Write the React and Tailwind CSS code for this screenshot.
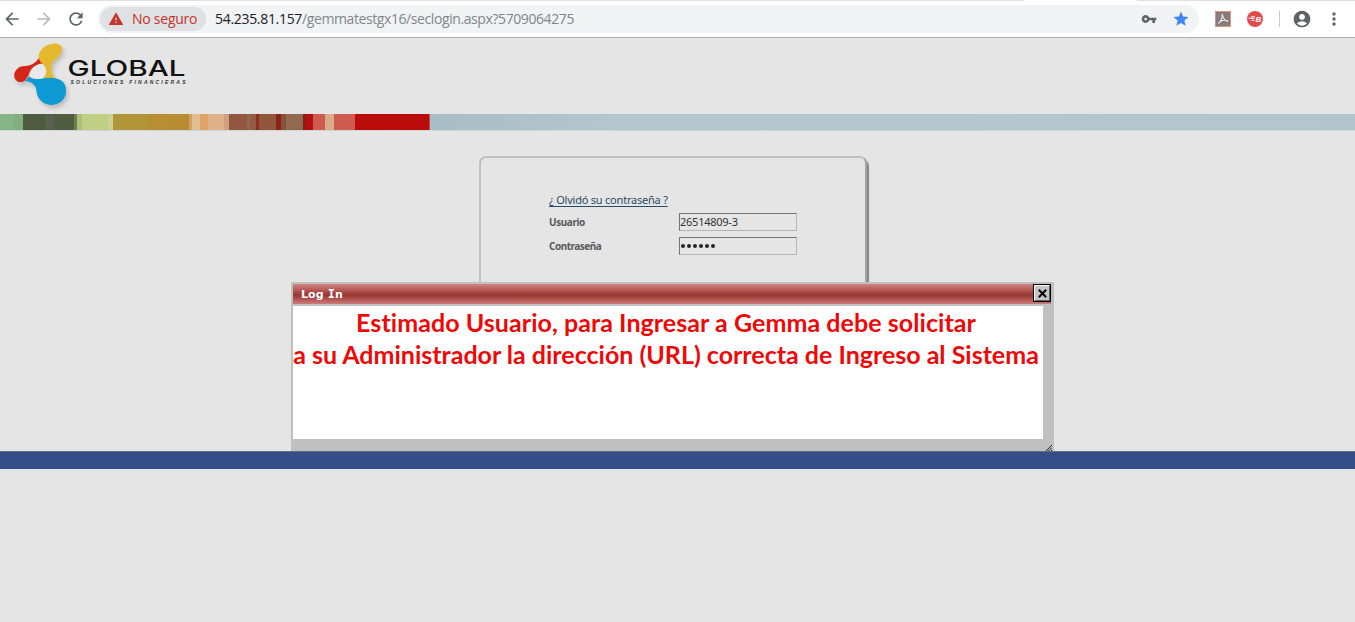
import React from "react";
import { MdArrowBack, MdArrowForward, MdRefresh, MdWarning, MdVpnKey, MdStar, MdAccountCircle, MdMoreVert } from "react-icons/md";

const stripes = [
  [0, 14, "#86b585"], [14, 9, "#80ae7e"], [23, 22, "#4e5b3e"], [45, 9, "#5b5f4d"], [54, 20, "#4f5c3f"], [74, 3, "#6f7d52"],
  [77, 5, "#abc078"], [82, 26, "#bfcf84"], [108, 5, "#ccd194"], [113, 35, "#b09638"], [148, 24, "#b68f34"], [172, 17, "#ba8c32"],
  [189, 3, "#cda466"], [192, 8, "#dfbe92"], [200, 8, "#e0a266"], [208, 16, "#dfb28c"], [224, 5, "#cba17e"],
  [229, 18, "#935741"], [247, 3, "#8e6b51"], [250, 6, "#965a43"], [256, 3, "#8d2d1c"], [259, 17, "#93543e"],
  [276, 5, "#8b2418"], [281, 5, "#87523d"], [286, 17, "#906a50"], [303, 2, "#7b2116"], [305, 8, "#b5110f"],
  [313, 12, "#cf5b50"], [325, 9, "#d9aa8b"], [334, 21, "#cf5b50"], [355, 74, "#bb0c0c"], [429, 1, "#c94a4a"],
];

function Toolbar() {
  return (
    <header className="flex h-[38px] flex-col border-b border-[#aeaeae] bg-white">
      <div className="flex h-px justify-between">
        <span className="w-[1024px] bg-[#dee1e6]" />
        <span className="w-[218px] bg-[#dee1e6]" />
      </div>
      <div className="flex h-9 items-center text-[#5f6368]">
        <MdArrowBack className="ml-[2px] size-5 shrink-0" />
        <MdArrowForward className="ml-3 size-5 shrink-0 text-[#babcbe]" />
        <MdRefresh className="ml-3 size-5 shrink-0" />
        <div className="ml-3 flex h-7 w-[1101px] shrink-0 items-center rounded-full bg-[#f1f3f4] pl-[2px]">
          <div className="flex h-6 w-[106px] shrink-0 items-center rounded-full bg-[#dfe1e4] pl-2 text-[#c5352b]">
            <MdWarning className="size-4 shrink-0" />
            <span className="ml-2 whitespace-nowrap font-['Open_Sans',sans-serif] text-[14px] leading-5 tracking-[-0.25px]">No seguro</span>
          </div>
          <p className="ml-[9px] whitespace-nowrap font-['Open_Sans',sans-serif] text-[14px] leading-5 tracking-[-0.41px] text-[#80868b]">
            <span className="tracking-[-0.31px] text-[#202124]">54.235.81.157</span>/gemmatestgx16/seclogin.aspx?5709064275
          </p>
          <MdVpnKey className="ml-auto size-4 shrink-0" />
          <MdStar className="ml-[15px] mr-[9px] size-[18px] shrink-0 text-[#4285f4]" />
        </div>
        <svg className="ml-4 size-4 shrink-0" viewBox="0 0 16 16" fill="none">
          <rect x=".5" y=".5" width="15" height="15" fill="#857c7c" stroke="#dd8f80" />
          <path d="M7.300 3C7.500 7 6 10 3.500 12.500M7.300 3C7.800 7 9.500 9.500 13 10.500M5 10.500C7.500 9 9.500 8.800 13 9.500" stroke="#f3eeee" strokeWidth="1.1" />
        </svg>
        <svg className="ml-4 size-4 shrink-0" viewBox="0 0 16 16">
          <circle cx="8" cy="8" r="8" fill="#e24a4e" />
          <path d="M1.500 7.300h6M4 5.800h4M4.500 9.300h3" stroke="white" strokeWidth="1.100" fill="none" />
          <text x="8.500" y="10.800" fill="white" fontFamily="Liberation Sans, sans-serif" fontWeight="700" fontStyle="italic" fontSize="8">B</text>
        </svg>
        <span className="ml-4 h-4 w-px bg-[#c8cacd]" />
        <MdAccountCircle className="ml-3 size-5 shrink-0" />
        <MdMoreVert className="ml-3 size-5 shrink-0" />
      </div>
    </header>
  );
}

function Logo() {
  return (
    <svg className="block h-[76px] w-[200px]" viewBox="0 38 200 76">
      <defs>
        <filter id="soft" x="-20%" y="-20%" width="150%" height="150%">
          <feDropShadow dx="2" dy="3" stdDeviation="2" floodColor="#777" floodOpacity=".4" />
        </filter>
      </defs>
      <g filter="url(#soft)">
        <path d="M40 56C36.500 62 33 65.500 25 66C18 66 14 71 14.200 76C14.500 82 22 84 25.500 80C30 76 28 69 36 65.500C39 64 41 64 43 64Z" fill="#d42617" />
        <path d="M39 54C42 47 48 43.500 55 43.500C62 44 63.500 48 61 53C58 59 51.500 60 51.300 67C51.500 73 52 76 57 79.500L43 79.500C48 74 47 67 42 63C39 61 38 57 39 54Z" fill="#e5b92d" />
        <path d="M24.500 81C26 80.500 27.500 79 28.800 76.500C33 79.500 37 79.500 43 78.500C50 77 57 78 62 81C66 84 66.500 90 65.800 94C64 101 58 105 51 105C43 104.500 37 99 36.500 91C36 85 32 81.500 24.500 81Z" fill="#0799d3" />
        <path d="M29.500 76C30.500 69 36 64 41.500 63.500C44.500 65.500 46.500 69 46 72.500C45.500 75 44 77.500 42 78.500C37 79.500 33 79 29.500 76Z" fill="#e9e9e9" />
      </g>
      <text x="67.500" y="75.500" fill="#111" fontFamily="Inter, sans-serif" fontWeight="500" fontSize="21.500" textLength="118" lengthAdjust="spacingAndGlyphs">GLOBAL</text>
      <text x="70.500" y="83.500" fill="#333" fontFamily="Liberation Sans, sans-serif" fontWeight="700" fontStyle="italic" fontSize="5" textLength="115">SOLUCIONES FINANCIERAS</text>
    </svg>
  );
}

function ColorBand() {
  return (
    <div className="flex h-[17px] border-b border-[#d0d4d4] bg-[#b2c4cc]">
      {stripes.map(([x, w, color]) => (
        <span key={x} className="h-full shrink-0" style={{ width: w, backgroundColor: color }} />
      ))}
      <span className="h-full flex-1 bg-linear-to-r from-[#a9bdc8] via-[#b3c6ce] via-20% to-[#b3c5cc]" />
    </div>
  );
}

function LoginCard() {
  return (
    <section className="ml-[479px] mt-[25px] h-[289px] w-[388px] rounded-[7px] border-2 border-[#c0c0c0] border-r-[#a5a5a5] pl-[68px] pt-[33px] font-['Noto_Sans',sans-serif] text-[#5a5a5a] shadow-[2px_3px_1px_#858585]">
      <a className="block h-[19px] whitespace-nowrap text-[11px] leading-[18px] tracking-[-0.22px] text-[#294b65] underline underline-offset-2">¿ Olvidó su contraseña ?</a>
      <div className="flex h-6 items-center">
        <label className="w-[130px] text-[10px] font-bold tracking-[-0.42px]">Usuario</label>
        <div className="h-[18px] w-[118px] border border-[#b5b5b5] border-l-[#747474] border-t-[#747474] text-[11px] leading-4 tracking-[-0.25px] text-[#333]">26514809-3</div>
      </div>
      <div className="flex h-6 items-center">
        <label className="w-[130px] text-[10px] font-bold tracking-[-0.5px]">Contraseña</label>
        <div className="flex h-[18px] w-[118px] items-center gap-[2px] border border-[#b5b5b5] border-l-[#747474] border-t-[#747474] pl-px">
          {[0, 1, 2, 3, 4, 5].map((i) => <span key={i} className="size-1 rounded-full bg-[#202820]" />)}
        </div>
      </div>
    </section>
  );
}

function Dialog() {
  return (
    <div className="absolute left-[291px] top-[282px] h-[170px] w-[763px] bg-[#c0c0c0] pl-[2px] pt-[2px]">
      <div className="flex h-5 w-[758px] items-start justify-between bg-[linear-gradient(#cf8582_0%,#b85b58_28%,#963733_55%,#b2514e_75%,#ca7c7a_100%)] pl-2">
        <h2 className="font-['DejaVu_Sans',sans-serif] text-[11px] font-bold leading-5 tracking-[0.1px] text-white">
          Log <span className="font-['DejaVu_Sans_Mono',monospace] text-[12px]">I</span>n
        </h2>
        <button className="flex h-[18px] w-[18px] items-center justify-center border border-black">
          <span className="flex size-4 items-center justify-center border border-b-[#606060] border-l-white border-r-[#606060] border-t-white bg-[#c5c5c5]">
            <svg className="size-[9px] shrink-0" viewBox="0 0 9 9"><path d="m.8.8 7.400 7.400M8.200.8.800 8.200" stroke="black" strokeWidth="2" /></svg>
          </span>
        </button>
      </div>
      <div className="mt-[2px] h-[133px] w-[750px] bg-white text-center font-['Lato',sans-serif] text-[25px] font-bold leading-8 text-[#ee0808]">
        <p className="whitespace-nowrap pr-1 tracking-[0.06px]">Estimado Usuario, para Ingresar a Gemma debe solicitar</p>
        <p className="whitespace-nowrap pr-1">a su Administrador la dirección (URL) correcta de Ingreso al Sistema</p>
      </div>
      <svg className="ml-auto mr-[2px] mt-[6px] size-2" viewBox="0 0 8 8"><path d="M0 8 8 0M2.500 8 8 2.500M5 8l3-3" stroke="#222" strokeWidth="1" /></svg>
    </div>
  );
}

export default function App() {
  return (
    <main className="relative h-[622px] w-[1355px] overflow-hidden bg-[#e5e5e5]">
      <Toolbar />
      <div className="h-[76px]"><Logo /></div>
      <ColorBand />
      <div className="h-80"><div className="flow-root"><LoginCard /></div></div>
      <Dialog />
      <footer className="relative h-[18px] border-t border-[#5b6f91] bg-[#344f87]" />
    </main>
  );
}
